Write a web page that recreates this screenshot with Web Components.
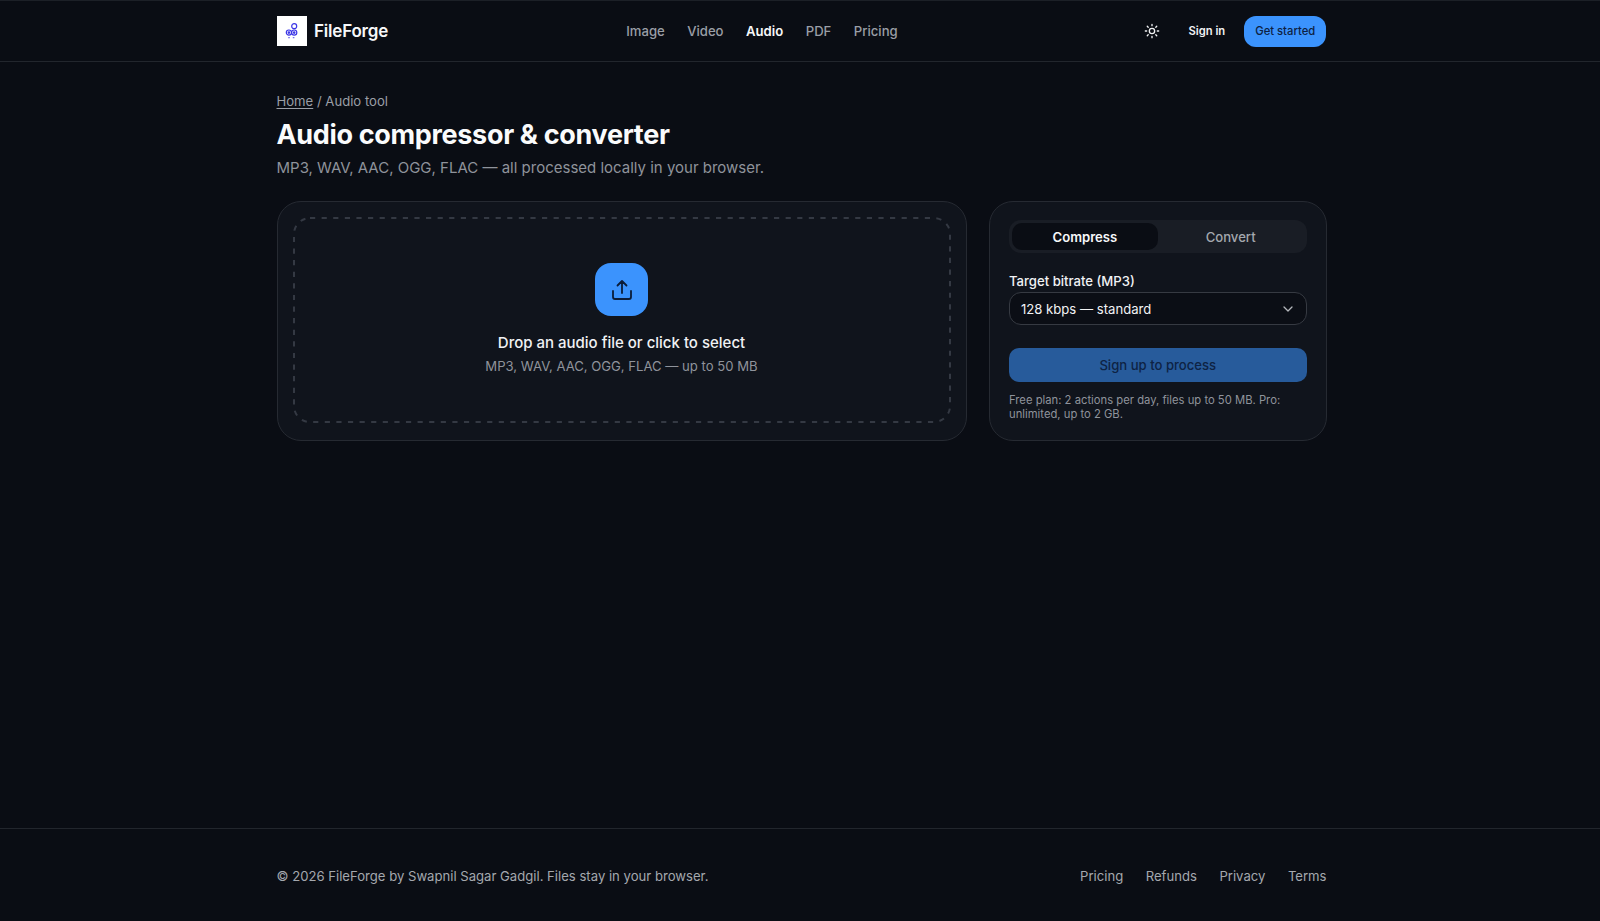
<!doctype html>
<html lang="en">
<head>
<meta charset="utf-8">
<title>Audio compressor & converter - FileForge</title>
<style>
html, body { margin: 0; padding: 0; height: 100%; }
body {
	--gutter: 276.5px;
	background: #0a0d14;
	color: #f4f5f7;
	font-family: Inter, "Liberation Sans", sans-serif;
	display: flex;
	flex-direction: column;
	min-height: 921px;
	box-sizing: border-box;
	overflow: hidden;
}
ff-main { flex: 1; }
</style>
</head>
<body>
<ff-header></ff-header>
<ff-main>
	<ff-crumbs></ff-crumbs>
	<ff-title heading="Audio compressor &amp; converter">MP3, WAV, AAC, OGG, FLAC — all processed locally in your browser.</ff-title>
	<ff-tool>
		<ff-drop></ff-drop>
		<ff-panel></ff-panel>
	</ff-tool>
</ff-main>
<ff-footer></ff-footer>

<script>
"use strict";
/* [ helper ]
=================================== */
const define = ( name, html ) => {
	customElements.define( name, class extends HTMLElement {
		constructor() {
			super();
			this.attachShadow( { mode: "open" } ).innerHTML = typeof html == "function" ? html( this ) : html;
		}
	} );
};

/* [ header ]
=================================== */
define( "ff-header", `
<style>
	:host { display: block; border-top: 1px solid #1c2027; border-bottom: 1px solid #22262d; }
	.bar { width: 1050px; height: 60px; margin-left: var( --gutter ); display: flex; align-items: center; justify-content: space-between; }
	.logo { display: flex; align-items: center; gap: 7.5px; font-size: 17px; font-weight: 600; color: #f7f8fa; letter-spacing: -.2px; }
	.mark { width: 30px; height: 30px; background: #fff; display: grid; place-items: center; }
	nav { display: flex; gap: 22.5px; font-size: 13.125px; font-weight: 500; color: #9a9ea6; }
	nav .on { color: #f7f8fa; font-weight: 600; }
	.acts { display: flex; align-items: center; font-size: 11.25px; font-weight: 600; }
	.sun { display: grid; place-items: center; width: 33px; margin-right: 19.5px; }
	.signin { color: #f1f2f4; margin-right: 18.75px; }
	.cta { background: #3b93fd; color: #0d2142; font-weight: 500; height: 31px; width: 82.5px; border-radius: 12px; display: grid; place-items: center; }
</style>
<div class="bar">
	<div class="logo">
		<span class="mark">
			<svg width="16" height="18" viewBox="0 0 16 18" fill="none" stroke="#3b35e6" stroke-width="1.2">
				<circle cx="10.2" cy="4.2" r="2.5"/>
				<circle cx="4.9" cy="10.6" r="2.6"/><circle cx="4.9" cy="10.6" r=".7"/>
				<circle cx="10.2" cy="10.6" r="2.6"/><circle cx="10.2" cy="10.6" r=".7"/>
				<path d="M4.2 15.6h1.6M8.8 15.6h1.6" stroke-width="1.4" stroke-opacity=".7"/>
			</svg>
		</span>
		<span>FileForge</span>
	</div>
	<nav><span>Image</span><span>Video</span><span class="on">Audio</span><span>PDF</span><span>Pricing</span></nav>
	<div class="acts">
		<span class="sun">
			<svg width="16" height="16" viewBox="0 0 24 24" fill="none" stroke="#f1f2f4" stroke-width="2" stroke-linecap="round">
				<circle cx="12" cy="12" r="4"/>
				<path d="M12 2v2M12 20v2M4.9 4.9l1.4 1.4M17.7 17.7l1.4 1.4M2 12h2M20 12h2M4.9 19.1l1.4-1.4M17.7 6.3l1.4-1.4"/>
			</svg>
		</span>
		<span class="signin">Sign in</span>
		<span class="cta">Get started</span>
	</div>
</div>` );

/* [ page heading ]
=================================== */
define( "ff-crumbs", `
<style>
	:host { display: block; width: 1050px; margin: 29px 0 0 var( --gutter ); font-size: 13.125px; line-height: 20px; color: #9a9ea6; }
	u { text-underline-offset: 2px; }
</style>
<u>Home</u> / Audio tool` );

define( "ff-title", el => `
<style>
	:host { display: block; width: 1050px; margin: 6px 0 0 var( --gutter ); }
	h1 { margin: 0; font-size: 27px; line-height: 36px; font-weight: 700; color: #fafbfc; letter-spacing: -.33px; }
	p { margin: 4px 0 0; font-size: 15px; line-height: 22px; color: #8f939b; }
</style>
<h1>${ el.getAttribute( "heading" ).replace( "&", "&amp;" ) }</h1>
<p><slot></slot></p>` );

/* [ tool area ]
=================================== */
define( "ff-tool", `
<style>
	:host { display: grid; grid-template-columns: 690px 337.5px; gap: 22.5px; width: 1050px; height: 240px; margin: 22px 0 0 var( --gutter ); }
</style>
<slot></slot>` );

define( "ff-drop", `
<style>
	:host { display: block; background: #10141c; border: 1px solid #262a32; border-radius: 24px; padding: 15px 15px 17px; box-sizing: border-box; }
	.zone { position: relative; height: 100%; box-sizing: border-box; display: flex; flex-direction: column; align-items: center; padding-top: 46px; }
	.dash { position: absolute; inset: 0; width: 100%; height: 100%; }
	.dash rect { x: 1px; y: 1px; width: calc( 100% - 2px ); height: calc( 100% - 2px ); fill: none; stroke: #343943; stroke-width: 2; stroke-dasharray: 5.2 6.4; }
	.tile { width: 53px; height: 53px; border-radius: 16px; background: #3b93fd; display: grid; place-items: center; }
	b { margin-top: 15px; font-size: 15px; line-height: 24px; font-weight: 500; color: #f1f2f4; }
	span { margin-top: 1px; font-size: 13.125px; line-height: 20px; color: #8f939b; }
</style>
<div class="zone">
	<svg class="dash"><rect rx="16" ry="16"/></svg>
	<div class="tile">
		<svg width="24" height="24" viewBox="0 0 24 24" fill="none" stroke="#0b1c38" stroke-width="1.8" stroke-linecap="round" stroke-linejoin="round">
			<path d="M12 15V3M7.5 7.5 12 3l4.5 4.5M3 13v6a2 2 0 0 0 2 2h14a2 2 0 0 0 2-2v-6"/>
		</svg>
	</div>
	<b>Drop an audio file or click to select</b>
	<span>MP3, WAV, AAC, OGG, FLAC — up to 50 MB</span>
</div>` );

define( "ff-panel", `
<style>
	:host { display: block; background: #10141c; border: 1px solid #262a32; border-radius: 24px; padding: 18px 19px; box-sizing: border-box; }
	.tabs { display: grid; grid-template-columns: 1fr 1fr; gap: 0; height: 33px; box-sizing: border-box; padding: 3px; background: #191d25; border-radius: 12px; font-size: 13.125px; font-weight: 500; color: #a4a8ae; }
	.tabs span { display: grid; place-items: center; border-radius: 10px; }
	.tabs .on { background: #0a0d14; color: #f7f8fa; font-weight: 600; }
	label { display: block; margin-top: 18px; font-size: 13.125px; line-height: 20px; font-weight: 500; color: #f1f2f4; }
	.select { margin-top: 1px; height: 33px; box-sizing: border-box; padding: 0 12px 0 11px; border: 1px solid #363a42; border-radius: 12px; background: #0b0e15; display: flex; align-items: center; justify-content: space-between; font-size: 13.125px; color: #f1f2f4; }
	.go { margin-top: 23px; height: 34px; border-radius: 10px; background: #275b9b; color: #0e2344; font-size: 13.125px; font-weight: 500; display: grid; place-items: center; }
	p { margin: 11px 0 0; font-size: 11.25px; line-height: 14px; color: #8f939b; }
</style>
<div class="tabs"><span class="on">Compress</span><span>Convert</span></div>
<label>Target bitrate (MP3)</label>
<div class="select">
	<span>128 kbps — standard</span>
	<svg width="12" height="12" viewBox="0 0 12 12" fill="none" stroke="#b4b7bc" stroke-width="1.3" stroke-linecap="round" stroke-linejoin="round"><path d="M2 4l4 4 4-4"/></svg>
</div>
<div class="go">Sign up to process</div>
<p>Free plan: 2 actions per day, files up to 50 MB. Pro: unlimited, up to 2 GB.</p>` );

/* [ footer ]
=================================== */
define( "ff-footer", `
<style>
	:host { display: block; border-top: 1px solid #22262d; }
	.row { width: 1050px; height: 91px; padding-top: 1px; margin-left: var( --gutter ); display: flex; justify-content: space-between; align-items: center; font-size: 13.125px; color: #a4a8ae; }
	.links { display: flex; gap: 22.5px; }
</style>
<div class="row">
	<span>© 2026 FileForge by Swapnil Sagar Gadgil. Files stay in your browser.</span>
	<span class="links"><span>Pricing</span><span>Refunds</span><span>Privacy</span><span>Terms</span></span>
</div>` );
</script>
</body>
</html>
